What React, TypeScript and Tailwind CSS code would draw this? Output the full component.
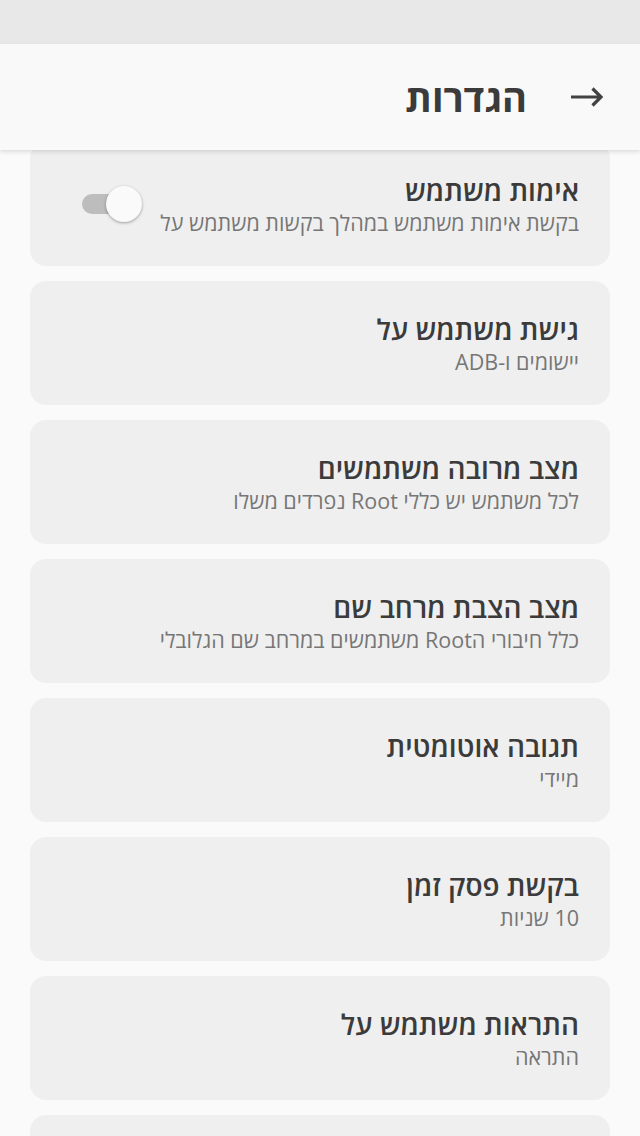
import React from 'react';

type Item = {
  title: string;
  summary: string;
  toggle?: boolean;
};

const items: Item[] = [
  { title: 'אימות משתמש', summary: 'בקשת אימות משתמש במהלך בקשות משתמש על', toggle: true },
  { title: 'גישת משתמש על', summary: 'יישומים ו-ADB' },
  { title: 'מצב מרובה משתמשים', summary: 'לכל משתמש יש כללי Root נפרדים משלו' },
  { title: 'מצב הצבת מרחב שם', summary: 'כלל חיבורי הRoot משתמשים במרחב שם הגלובלי' },
  { title: 'תגובה אוטומטית', summary: 'מיידי' },
  { title: 'בקשת פסק זמן', summary: '10 שניות' },
  { title: 'התראות משתמש על', summary: 'התראה' },
];

function Toggle() {
  return (
    <div className="relative w-[60px] h-[38px] shrink-0">
      <div className="absolute left-0 top-[9px] w-[44px] h-[20px] rounded-full bg-[#bdbdbd]" />
      <div className="absolute right-0 top-px w-[36px] h-[36px] rounded-full bg-[#fafafa] shadow-[0_1px_3px_rgba(0,0,0,0.35)]" />
    </div>
  );
}

function SettingCard({ item }: { item: Item }) {
  return (
    <div className="h-[124px] shrink-0 rounded-2xl bg-[#efefef] flex items-center justify-between pr-[31px] pl-[52px]">
      <div className="flex flex-col">
        <span className="text-[28px] leading-[36px] font-semibold text-[#3b3b3b]">{item.title}</span>
        <span className="text-[21.5px] leading-[29px] text-[#767676]">{item.summary}</span>
      </div>
      {item.toggle && <Toggle />}
    </div>
  );
}

export default function App() {
  return (
    <div
      dir="rtl"
      className="w-[640px] h-[1136px] overflow-hidden bg-[#fafafa] flex flex-col"
      style={{ fontFamily: '"Open Sans", "DejaVu Sans", sans-serif' }}
    >
      <div className="h-[44px] shrink-0 bg-[#e8e8e8]" />

      <header className="relative z-10 h-[106px] shrink-0 bg-[#f9f9f9] shadow-[0_2px_4px_rgba(0,0,0,0.12)] flex items-center gap-[43px] pr-[36px]">
        <svg width="34" height="22" viewBox="0 0 34 22" className="shrink-0">
          <path d="M1 11 H31 M22.5 2.5 L31 11 L22.5 19.5" fill="none" stroke="#424242" strokeWidth="3.2" />
        </svg>
        <h1 className="text-[38px] font-bold text-[#3b3b3b] leading-none">הגדרות</h1>
      </header>

      <div className="-mt-2 flex flex-col gap-[15px] px-[30px]">
        {items.map((item) => (
          <SettingCard key={item.title} item={item} />
        ))}
        <div className="h-[124px] shrink-0 rounded-2xl bg-[#efefef]" />
      </div>
    </div>
  );
}
